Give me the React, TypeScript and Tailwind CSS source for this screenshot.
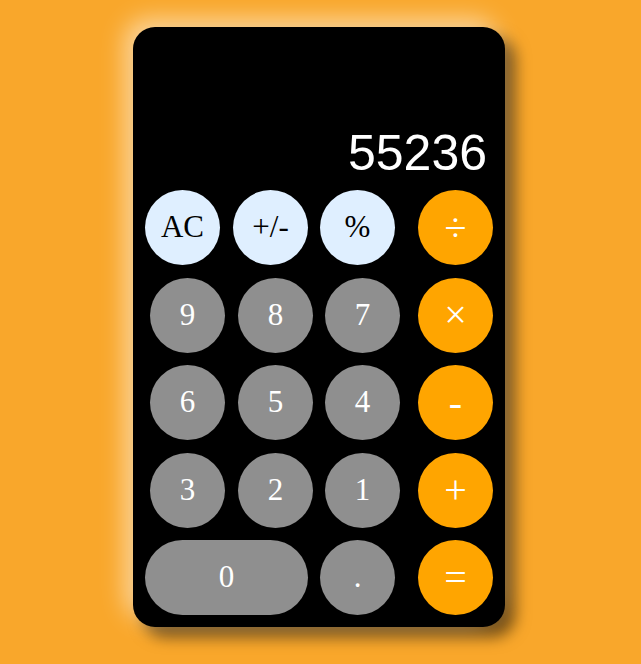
import React from 'react';

const serif = "font-['Liberation_Serif','Times_New_Roman',serif]";
const sans = "font-['Liberation_Sans',Arial,sans-serif]";

const circle = 'w-[75px] h-[75px] rounded-full flex items-center justify-center shrink-0';
const fn = `${circle} bg-[#dfefff] text-black text-[31px] ${serif}`;
const num = `${circle} bg-[#8f8f8f] text-white text-[31px] ${serif}`;
const op = `${circle} bg-[#ffa500] text-white text-[40px] ${serif}`;

export default function App() {
  return (
    <div className="min-h-screen bg-[#f9a72b] flex pl-[133px] pt-[27px] pb-[37px]">
      <div className="w-[372px] h-[600px] bg-black rounded-[22px] shadow-[-8px_-8px_25px_rgba(255,255,255,0.55),10px_10px_15px_rgba(0,0,0,0.55)] flex flex-col px-[12px] pb-[12px]">
        <div className={`h-[163px] flex items-end justify-end pr-[6px] pb-[12px] text-white text-[50px] leading-none ${sans}`}>
          55236
        </div>
        <div className="flex flex-col gap-[12.5px]">
          <div className="flex items-center">
            <button className={fn}>AC</button>
            <button className={`${fn} ml-[13px]`}>+/-</button>
            <button className={`${fn} ml-[12px]`}>%</button>
            <button className={`${op} ml-[23px]`}>÷</button>
          </div>
          {[
            ['9', '8', '7', '×'],
            ['6', '5', '4', '-'],
            ['3', '2', '1', '+'],
          ].map((r) => (
            <div key={r[3]} className="flex items-center pl-[5px]">
              <button className={num}>{r[0]}</button>
              <button className={`${num} ml-[13px]`}>{r[1]}</button>
              <button className={`${num} ml-[12px]`}>{r[2]}</button>
              <button className={`${op} ml-[18px]`}>{r[3]}</button>
            </div>
          ))}
          <div className="flex items-center">
            <button className={`h-[75px] w-[163px] rounded-full bg-[#8f8f8f] text-white text-[31px] ${serif}`}>0</button>
            <button className={`${num} ml-[12px]`}>.</button>
            <button className={`${op} ml-[23px]`}>=</button>
          </div>
        </div>
      </div>
    </div>
  );
}
